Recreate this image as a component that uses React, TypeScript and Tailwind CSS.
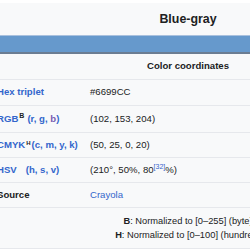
import React from 'react'

// Infobox rows: label node + value node
const link = 'text-[#3366cc]'

function Row({ label, value, h }: { label: React.ReactNode; value: React.ReactNode; h: string }) {
  return (
    <div className={`grid grid-cols-[100px_1fr] items-center border-t border-[#e6e8ec] ${h}`}>
      <div className="pl-[7px] font-bold whitespace-nowrap">{label}</div>
      <div className="whitespace-nowrap text-[#202122]">{value}</div>
    </div>
  )
}

export default function App() {
  return (
    <div className="w-[250px] h-[250px] overflow-hidden bg-white" style={{ fontFamily: '"Liberation Sans", Arial, sans-serif' }}>
      <div className="ml-[-10px] mt-[3px] w-[396px] bg-[#f8f9fa] border-b border-[#e6e8ec] text-[9.6px] text-[#202122]">
        {/* Title */}
        <div className="h-[32px] flex items-center justify-center text-[12.4px] font-bold leading-none pt-[1px]">Blue-gray</div>

        {/* Swatch */}
        <div className="h-[19px] bg-[#6699cc] border-t border-[#a9c1de] border-b-2 border-b-[#6b7d92]" />

        {/* Section header */}
        <div className="h-[25px] flex items-center justify-center font-bold">Color coordinates</div>

        <Row h="h-[26px]" label={<span className={link}>Hex triplet</span>} value="#6699CC" />
        <Row
          h="h-[27px]"
          label={
            <span className={link}>
              RGB<sup className="text-[#202122] text-[7px] ml-[1px]">B</sup>
              <span className="ml-[3px]">(r, g, <span className="text-[#795cb2]">b</span>)</span>
            </span>
          }
          value="(102, 153, 204)"
        />
        <Row
          h="h-[25px]"
          label={
            <span className={link}>
              CMYK<sup className="text-[#202122] text-[6px] ml-[1px]">H</sup>
              <span className="ml-[1px]">(c, m, y, k)</span>
            </span>
          }
          value="(50, 25, 0, 20)"
        />
        <Row
          h="h-[25px]"
          label={
            <span className={link}>
              HSV<span className="ml-[9px]">(h, s, v)</span>
            </span>
          }
          value={
            <>
              (210°, 50%, 80<sup className={`${link} text-[7px]`}>[32]</sup>%)
            </>
          }
        />
        <Row h="h-[25px]" label="Source" value={<span className={link}>Crayola</span>} />

        {/* Footnotes */}
        <div className="border-t border-[#e6e8ec] h-[41px] flex flex-col items-center justify-center text-[9.3px] leading-[14px]">
          <div>
            <b>B</b>: Normalized to [0–255] (byte)
          </div>
          <div>
            <b>H</b>: Normalized to [0–100] (hundred)
          </div>
        </div>
      </div>
    </div>
  )
}
